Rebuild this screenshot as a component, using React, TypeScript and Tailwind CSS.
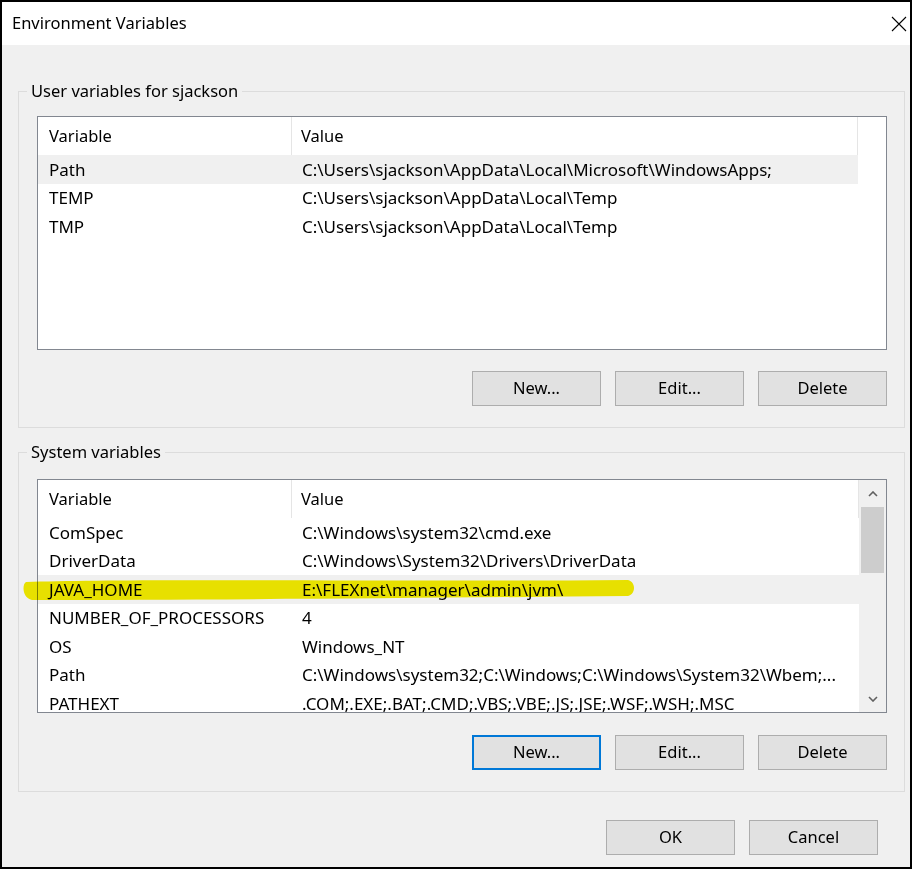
const font = "font-['Noto_Sans',sans-serif]";

type Row = { name: string; value: string; selected?: boolean };

const userRows: Row[] = [
  { name: "Path", value: "C:\\Users\\sjackson\\AppData\\Local\\Microsoft\\WindowsApps;", selected: true },
  { name: "TEMP", value: "C:\\Users\\sjackson\\AppData\\Local\\Temp" },
  { name: "TMP", value: "C:\\Users\\sjackson\\AppData\\Local\\Temp" },
];

const systemRows: Row[] = [
  { name: "ComSpec", value: "C:\\Windows\\system32\\cmd.exe" },
  { name: "DriverData", value: "C:\\Windows\\System32\\Drivers\\DriverData" },
  { name: "JAVA_HOME", value: "E:\\FLEXnet\\manager\\admin\\jvm\\", selected: true },
  { name: "NUMBER_OF_PROCESSORS", value: "4" },
  { name: "OS", value: "Windows_NT" },
  { name: "Path", value: "C:\\Windows\\system32;C:\\Windows;C:\\Windows\\System32\\Wbem;..." },
  { name: "PATHEXT", value: ".COM;.EXE;.BAT;.CMD;.VBS;.VBE;.JS;.JSE;.WSF;.WSH;.MSC" },
];

function Button({ label, focused }: { label: string; focused?: boolean }) {
  return (
    <button
      className={
        "flex h-[35px] w-[129px] items-center justify-center bg-[#e1e1e1] text-[16.5px] text-black " +
        (focused ? "border-2 border-[#0078d7]" : "border border-[#adadad]")
      }
    >
      {label}
    </button>
  );
}

function VarList({ rows, scroll }: { rows: Row[]; scroll?: boolean }) {
  return (
    <div className="flex h-[234px] w-[850px] overflow-hidden border border-[#828790] bg-white">
      <div className="flex flex-1 flex-col overflow-hidden">
        <div className="flex h-[38px] shrink-0 items-center border-r border-[#e5e5e5] text-[16.5px]">
          <div className="flex h-full w-[254px] items-center border-r border-[#e5e5e5] pl-[11px]">Variable</div>
          <div className="pl-[9px]">Value</div>
        </div>
        {rows.map((r) => (
          <div
            key={r.name + r.value}
            className={"flex h-[28.5px] shrink-0 items-center text-[17px] " + (r.selected ? "bg-[#f0f0f0]" : "")}
          >
            <div className="w-[254px] shrink-0 pl-[11px] whitespace-nowrap">{r.name}</div>
            <div className="pl-[10px] whitespace-nowrap">{r.value}</div>
          </div>
        ))}
      </div>
      {scroll ? (
        <div className="flex w-[27px] shrink-0 flex-col bg-[#f0f0f0]">
          <div className="flex h-[27px] items-center justify-center">
            <svg width="10" height="6" viewBox="0 0 10 6">
              <path d="M1 5 L5 1 L9 5" fill="none" stroke="#606060" strokeWidth="1.6" />
            </svg>
          </div>
          <div className="mx-[2px] h-[66px] bg-[#cdcdcd]" />
          <div className="flex-1" />
          <div className="flex h-[27px] items-center justify-center">
            <svg width="10" height="6" viewBox="0 0 10 6">
              <path d="M1 1 L5 5 L9 1" fill="none" stroke="#606060" strokeWidth="1.6" />
            </svg>
          </div>
        </div>
      ) : (
        <div className="w-[28px] shrink-0" />
      )}
    </div>
  );
}

function Group({ title, children }: { title: string; children: React.ReactNode }) {
  return (
    <fieldset className="ml-[16px] w-[887px] border border-[#dcdcdc] pr-[16px] pb-[21px] pl-[18px]">
      <legend className="-ml-[10px] px-[4px] text-[16.5px] leading-[24px]">{title}</legend>
      {children}
    </fieldset>
  );
}

export default function App() {
  return (
    <div className={"relative h-[869px] w-[912px] overflow-hidden border-2 border-black bg-[#f0f0f0] text-black " + font}>
      <div className="flex h-[43px] items-center justify-between bg-white pl-[10px] pr-[3px]">
        <span className="text-[16.5px]">Environment Variables</span>
        <svg width="16" height="16" viewBox="0 0 16 16">
          <path d="M1 1 L15 15 M15 1 L1 15" stroke="#000" strokeWidth="1.1" />
        </svg>
      </div>

      <div className="mt-[34px]">
        <Group title="User variables for sjackson">
          <div className="pt-[13px]">
            <VarList rows={userRows} />
          </div>
          <div className="mt-[21px] flex justify-end gap-[14px] pr-[1px]">
            <Button label="New..." />
            <Button label="Edit..." />
            <Button label="Delete" />
          </div>
        </Group>
      </div>

      <div className="mt-[12px]">
        <Group title="System variables">
          <div className="pt-[15px]">
            <VarList rows={systemRows} scroll />
          </div>
          <div className="mt-[22px] flex justify-end gap-[14px] pr-[1px]">
            <Button label="New..." focused />
            <Button label="Edit..." />
            <Button label="Delete" />
          </div>
        </Group>
      </div>

      <div className="mt-[28px] flex justify-end gap-[14px] pr-[32px]">
        <Button label="OK" />
        <Button label="Cancel" />
      </div>

      {/* highlighter stroke over JAVA_HOME */}
      <svg className="pointer-events-none absolute left-0 top-0 mix-blend-multiply" width="912" height="869">
        <path
          d="M24 580 C 120 576, 400 580, 626 578 C 634 580, 634 592, 626 594 C 420 596, 200 598, 30 598 C 20 596, 20 582, 24 580 Z"
          fill="#f6ee00"
        />
      </svg>
    </div>
  );
}
